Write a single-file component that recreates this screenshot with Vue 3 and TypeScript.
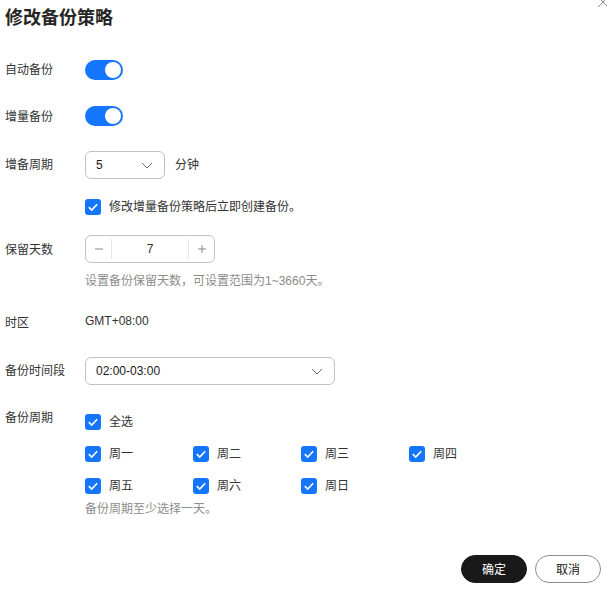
<script setup lang="ts">
import { ref } from 'vue'

const autoBackup = ref(true)
const incrementalBackup = ref(true)
const backupNow = ref(true)
const keepDays = ref(7)

const days = ref([
  { label: '周一', checked: true },
  { label: '周二', checked: true },
  { label: '周三', checked: true },
  { label: '周四', checked: true },
  { label: '周五', checked: true },
  { label: '周六', checked: true },
  { label: '周日', checked: true }
])

function toggleAll() {
  const next = !days.value.every(d => d.checked)
  days.value.forEach(d => (d.checked = next))
}
</script>

<template>
  <div class="dialog">
    <svg class="close" width="12" height="12" viewBox="0 0 12 12">
      <path d="M1 1l10 10M11 1L1 11" stroke="#8a8a8a" stroke-width="1" fill="none" />
    </svg>
    <h1 class="title">修改备份策略</h1>

    <div class="row row-auto">
      <span class="label">自动备份</span>
      <button class="switch" :class="{ on: autoBackup }" @click="autoBackup = !autoBackup"><i></i></button>
    </div>

    <div class="row row-incr">
      <span class="label">增量备份</span>
      <button class="switch" :class="{ on: incrementalBackup }" @click="incrementalBackup = !incrementalBackup"><i></i></button>
    </div>

    <div class="row row-period">
      <span class="label">增备周期</span>
      <div class="control-inline">
        <div class="select small">
          <span>5</span>
          <svg width="12" height="7" viewBox="0 0 12 7"><path d="M1 1l5 5 5-5" stroke="#6b6b6b" stroke-width="1" fill="none" /></svg>
        </div>
        <span class="unit">分钟</span>
      </div>
    </div>

    <div class="row row-check">
      <span class="label"></span>
      <label class="check" @click.prevent="backupNow = !backupNow">
        <span class="box" :class="{ on: backupNow }">
          <svg v-if="backupNow" width="16" height="16" viewBox="0 0 16 16"><path d="M3.8 8.2l2.9 2.8 5.5-5.8" stroke="#fff" stroke-width="1.6" fill="none" /></svg>
        </span>
        <span>修改增量备份策略后立即创建备份。</span>
      </label>
    </div>

    <div class="row row-keep">
      <span class="label">保留天数</span>
      <div>
        <div class="stepper">
          <button class="step" @click="keepDays--">
            <svg width="10" height="10" viewBox="0 0 10 10"><path d="M1 5h8" stroke="#8a8a8a" fill="none" /></svg>
          </button>
          <span class="value">{{ keepDays }}</span>
          <button class="step" @click="keepDays++">
            <svg width="10" height="10" viewBox="0 0 10 10"><path d="M1 5h8M5 1v8" stroke="#8a8a8a" fill="none" /></svg>
          </button>
        </div>
        <p class="help help-keep">设置备份保留天数，可设置范围为1~3660天。</p>
      </div>
    </div>

    <div class="row row-zone">
      <span class="label zone-label">时区</span>
      <span class="zone">GMT+08:00</span>
    </div>

    <div class="row row-time">
      <span class="label">备份时间段</span>
      <div class="select wide">
        <span>02:00-03:00</span>
        <svg width="12" height="7" viewBox="0 0 12 7"><path d="M1 1l5 5 5-5" stroke="#6b6b6b" stroke-width="1" fill="none" /></svg>
      </div>
    </div>

    <div class="row row-cycle">
      <span class="label cycle-label">备份周期</span>
      <div>
        <label class="check" @click.prevent="toggleAll">
          <span class="box on">
            <svg width="16" height="16" viewBox="0 0 16 16"><path d="M3.8 8.2l2.9 2.8 5.5-5.8" stroke="#fff" stroke-width="1.6" fill="none" /></svg>
          </span>
          <span>全选</span>
        </label>
        <div class="days">
          <label v-for="day in days" :key="day.label" class="check" @click.prevent="day.checked = !day.checked">
            <span class="box" :class="{ on: day.checked }">
              <svg v-if="day.checked" width="16" height="16" viewBox="0 0 16 16"><path d="M3.8 8.2l2.9 2.8 5.5-5.8" stroke="#fff" stroke-width="1.6" fill="none" /></svg>
            </span>
            <span>{{ day.label }}</span>
          </label>
        </div>
        <p class="help help-cycle">备份周期至少选择一天。</p>
      </div>
    </div>

    <div class="footer">
      <button class="btn primary">确定</button>
      <button class="btn">取消</button>
    </div>
  </div>
</template>

<style scoped>
.dialog {
  position: relative;
  width: 607px;
  height: 593px;
  box-sizing: border-box;
  padding: 0 6px 0 5px;
  overflow: hidden;
  background: #fff;
  color: #191919;
  font-family: "Liberation Sans", "Noto Sans CJK SC", sans-serif;
  font-size: 12px;
}
.close {
  position: absolute;
  top: -4px;
  right: -2px;
}
.title {
  margin: 0;
  font-size: 18px;
  line-height: 36px;
  font-weight: 700;
  color: #252525;
}
.row {
  display: flex;
  align-items: center;
}
.row-auto { margin-top: 24px; }
.row-incr { margin-top: 26px; }
.row-period { margin-top: 25px; }
.row-check { margin-top: 20px; }
.row-keep { margin-top: 20px; align-items: flex-start; }
.row-zone { margin-top: 23px; align-items: flex-start; }
.row-time { margin-top: 25px; }
.row-cycle { margin-top: 29px; align-items: flex-start; }
.label {
  flex: none;
  width: 80px;
  line-height: 18px;
  color: #333;
}
.row-incr .label { margin-top: 2px; }
.row-keep .label { margin-top: 6px; }
.zone-label { margin-top: 2px; }
.cycle-label { margin-top: -5px; }
.zone {
  line-height: 16px;
  margin-top: 1px;
  color: #333;
}
.switch {
  position: relative;
  width: 38px;
  height: 20px;
  padding: 0;
  border: none;
  border-radius: 10px;
  background: #c7c7c7;
}
.switch.on { background: #1476ff; }
.switch i {
  position: absolute;
  top: 2px;
  left: 2px;
  width: 16px;
  height: 16px;
  border-radius: 50%;
  background: #fff;
}
.switch.on i { left: 20px; }
.control-inline {
  display: flex;
  align-items: center;
  gap: 10px;
}
.select {
  display: flex;
  align-items: center;
  justify-content: space-between;
  box-sizing: border-box;
  height: 28px;
  padding: 0 11px 0 10px;
  border: 1px solid #c2c2c2;
  border-radius: 6px;
  color: #191919;
}
.select.small { width: 80px; }
.select.wide { width: 250px; }
.unit {
  margin-bottom: 4px;
  color: #333;
}
.check {
  display: flex;
  align-items: center;
  gap: 8px;
  line-height: 16px;
  color: #333;
}
.box {
  flex: none;
  width: 16px;
  height: 16px;
  box-sizing: border-box;
  border: 1px solid #c2c2c2;
  border-radius: 3px;
  background: #fff;
}
.box.on {
  border: none;
  background: #1476ff;
}
.box svg { display: block; }
.stepper {
  display: flex;
  align-items: center;
  box-sizing: border-box;
  width: 130px;
  height: 28px;
  border: 1px solid #c2c2c2;
  border-radius: 6px;
}
.step {
  display: flex;
  align-items: center;
  justify-content: center;
  flex: none;
  width: 26px;
  height: 20px;
  padding: 0;
  border: none;
  background: none;
}
.step:first-child { border-right: 1px solid #e6e6e6; }
.step:last-child { border-left: 1px solid #e6e6e6; }
.value {
  flex: 1;
  text-align: center;
  color: #333;
}
.help {
  margin: 0;
  line-height: 16px;
  color: #8c8c8c;
}
.help-keep { margin-top: 10px; }
.help-cycle { margin-top: 7px; }
.days {
  display: grid;
  grid-template-columns: repeat(4, 108px);
  row-gap: 16px;
  margin-top: 16px;
}
.footer {
  display: flex;
  justify-content: flex-end;
  gap: 8px;
  margin-top: 38px;
}
.btn {
  box-sizing: border-box;
  width: 66px;
  height: 28px;
  padding: 0 0 2px;
  border: 1px solid #8c8c8c;
  border-radius: 14px;
  background: #fff;
  color: #191919;
  font: inherit;
}
.btn.primary {
  border-color: #191919;
  background: #191919;
  color: #fff;
}
</style>

<style>
html, body { background: #fff; }
</style>
